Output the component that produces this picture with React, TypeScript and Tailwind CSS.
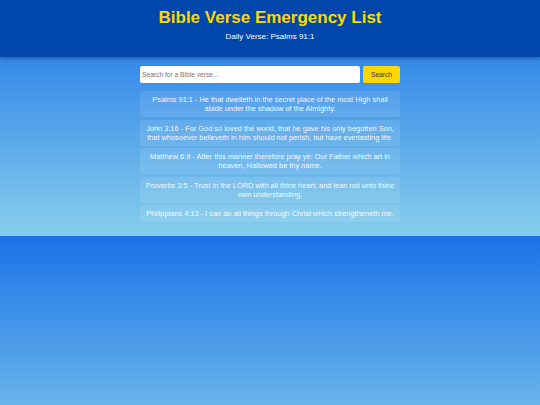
import { useState } from "react";

const verses = [
  "Psalms 91:1 - He that dwelleth in the secret place of the most High shall abide under the shadow of the Almighty.",
  "John 3:16 - For God so loved the world, that he gave his only begotten Son, that whosoever believeth in him should not perish, but have everlasting life.",
  "Matthew 6:9 - After this manner therefore pray ye: Our Father which art in heaven, Hallowed be thy name.",
  "Proverbs 3:5 - Trust in the LORD with all thine heart; and lean not unto thine own understanding.",
  "Philippians 4:13 - I can do all things through Christ which strengtheneth me.",
];

export default function App() {
  const [query, setQuery] = useState("");

  const shown = verses.filter((v) =>
    v.toLowerCase().includes(query.toLowerCase())
  );

  return (
    <div className="min-h-screen font-['Liberation_Sans',Arial,sans-serif] bg-[linear-gradient(to_bottom,#1a73e8,#87ceeb)] bg-[length:100%_236px] bg-repeat">
      <header className="bg-[#0047ab] pt-[8px] pb-[16px] text-center shadow-[0_2px_4px_rgba(0,0,0,0.3)] relative">
        <h1 className="text-[17px] leading-[20px] font-bold text-[#ffd700]">
          Bible Verse Emergency List
        </h1>
        <p className="mt-[4px] text-[8px] leading-[9px] text-white">
          Daily Verse: Psalms 91:1
        </p>
      </header>

      <main className="w-[260px] mx-auto pt-[9px] pb-[14px]">
        <div className="flex gap-[3px] h-[17px] mb-[8px]">
          <input
            value={query}
            onChange={(e) => setQuery(e.target.value)}
            placeholder="Search for a Bible verse..."
            className="flex-1 min-w-0 bg-white rounded-[2px] px-[2px] text-[6.67px] text-gray-800 placeholder:text-[#757575] outline-none"
          />
          <button className="w-[37px] bg-[#ffd700] rounded-[2px] text-[6.67px] text-[#333]">
            Search
          </button>
        </div>

        <div className="flex flex-col gap-[2.5px]">
          {shown.map((v) => (
            <div
              key={v}
              className="bg-white/10 rounded-[3px] px-[4px] py-[4px] text-center text-[7.4px] leading-[9px] text-white/95"
            >
              {v}
            </div>
          ))}
        </div>
      </main>
    </div>
  );
}
